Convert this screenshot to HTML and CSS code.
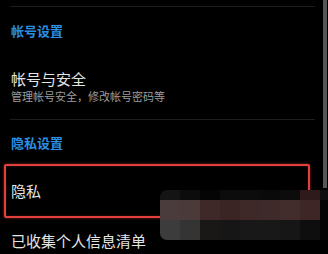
FILE: index.html
```html
<!DOCTYPE html>
<html>
<head>
    <meta charset="utf-8">
    <title>帐号设置</title>
    <link rel="stylesheet" href="styles.css">
</head>
<body>
    <div class="page">
        <div class="divider first"></div>
        <div class="group-title">帐号设置</div>
        <div class="item">
            <div class="item-title">帐号与安全</div>
            <div class="item-desc">管理帐号安全，修改帐号密码等</div>
        </div>
        <div class="divider"></div>
        <div class="group-title second">隐私设置</div>
        <div class="item highlight">
            <div class="item-title">隐私</div>
        </div>
        <div class="item last">
            <div class="item-title">已收集个人信息清单</div>
        </div>

        <div class="scrollbar"></div>

        <div class="mosaic">
            <div class="cell" style="background:#141414"></div>
            <div class="cell" style="background:#0c0c0c"></div>
            <div class="cell" style="background:#050505"></div>
            <div class="cell" style="background:#0c0c0c"></div>
            <div class="cell" style="background:#0c0c0c"></div>
            <div class="cell" style="background:#0a0a0a"></div>
            <div class="cell" style="background:#0c0c0c"></div>
            <div class="cell" style="background:#2e1a1a"></div>
            <div class="cell" style="background:#0e0e0e"></div>

            <div class="cell" style="background:#4a3c3c"></div>
            <div class="cell" style="background:#4a3a3a"></div>
            <div class="cell" style="background:#3e2828"></div>
            <div class="cell" style="background:#3a2424"></div>
            <div class="cell" style="background:#3e2828"></div>
            <div class="cell" style="background:#3e2a2a"></div>
            <div class="cell" style="background:#422c2c"></div>
            <div class="cell" style="background:#3e2626"></div>
            <div class="cell" style="background:#050505"></div>

            <div class="cell" style="background:#3c3c3c"></div>
            <div class="cell" style="background:#343434"></div>
            <div class="cell" style="background:#1a1717"></div>
            <div class="cell" style="background:#161616"></div>
            <div class="cell" style="background:#181818"></div>
            <div class="cell" style="background:#181818"></div>
            <div class="cell" style="background:#161616"></div>
            <div class="cell" style="background:#0e0e0e"></div>
            <div class="cell" style="background:#050505"></div>
        </div>
    </div>
</body>
</html>
```

FILE: styles.css
```css
body {
    margin: 0;
    padding: 0;
    background-color: #000;
    font-family: "Noto Sans CJK SC", "Noto Sans", sans-serif;
}
.page {
    position: relative;
    width: 328px;
    height: 254px;
    overflow: hidden;
    padding-left: 11px;
    box-sizing: border-box;
}
.divider {
    height: 1px;
    width: 305px;
    margin-left: -1px;
    background-color: #1d1d1d;
}
.divider.first {
    margin-top: 6px;
}
.group-title {
    padding-top: 15px;
    font-size: 13px;
    line-height: 18px;
    font-weight: bold;
    color: #2a8fe0;
}
.group-title.second {
    padding-top: 14px;
}
.item {
    padding-top: 29px;
    padding-bottom: 15px;
}
.item-title {
    font-size: 15px;
    line-height: 20px;
    color: #e4e4e4;
}
.item-desc {
    font-size: 11px;
    line-height: 15px;
    color: #9c9c9c;
}
.highlight {
    margin-top: 12px;
    margin-left: -7px;
    width: 306px;
    padding: 15px 0 15px 5px;
    border: 2px solid #e0413f;
    border-radius: 2px;
    box-shadow: 0 0 3px rgba(230, 60, 60, 0.6), inset 0 0 2px rgba(230, 60, 60, 0.4);
    box-sizing: border-box;
}
.item.last {
    padding-top: 13px;
}
.scrollbar {
    position: absolute;
    top: 0;
    left: 323px;
    width: 4px;
    height: 188px;
    background-color: #575757;
}
.mosaic {
    position: absolute;
    left: 160px;
    top: 190px;
    width: 168px;
    display: grid;
    grid-template-columns: repeat(8, 20px) 8px;
    grid-template-rows: 10px 20px 20px;
    border-radius: 7px 0 0 7px;
    overflow: hidden;
}
```
